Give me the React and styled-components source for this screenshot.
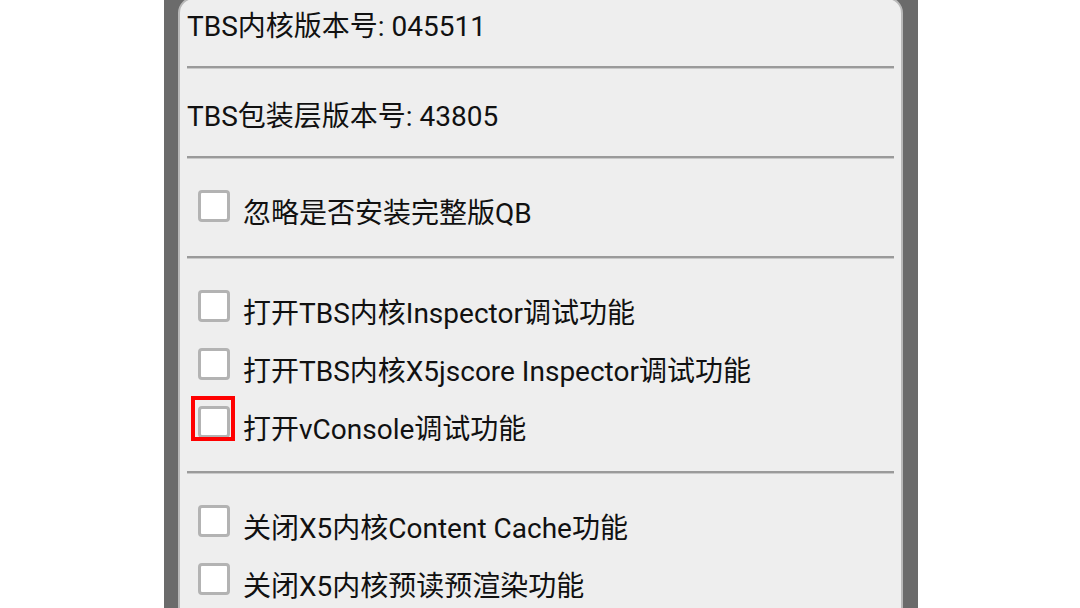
import React from "react";
import styled, { createGlobalStyle } from "styled-components";

const Global = createGlobalStyle`
  html, body { margin: 0; padding: 0; background: #ffffff; }
  body { font-family: Roboto, "Noto Sans CJK SC", sans-serif; overflow: hidden; }
  #root { width: 1080px; height: 608px; overflow: hidden; }
`;

const Frame = styled.div`
  margin-left: 164px;
  width: 754px;
  height: 608px;
  box-sizing: border-box;
  padding: 0 15px 0 14px;
  background: #6b6b6b;
  overflow: hidden;
`;

const Panel = styled.div`
  margin-top: -3px;
  height: 660px;
  box-sizing: border-box;
  border: 2px solid #b9b9b9;
  border-radius: 16px;
  background: #eeeeee;
  padding: 1px 7px 0 7px;
  display: flex;
  flex-direction: column;
  & > * { flex: none; }
`;

const InfoRow = styled.div`
  height: 48px;
  margin-top: ${(p) => (p.$first ? "0" : "21px")};
  display: flex;
  align-items: center;
  font-size: 28px;
  color: #111111;
  white-space: nowrap;
`;

const Divider = styled.div`
  margin-top: ${(p) => p.$mt ?? 18}px;
  height: 3px;
  background: linear-gradient(#9a9a9a 0, #9a9a9a 2px, #c9c9c9 2px, #c9c9c9 3px);
`;

const Section = styled.div`
  padding: 18px 0 ${(p) => p.$pb ?? 0}px 0;
  display: flex;
  flex-direction: column;
`;

const CheckRow = styled.label`
  height: 58px;
  flex: none;
  display: flex;
  align-items: center;
  gap: 13px;
  padding-left: 11px;
  font-size: 28px;
  color: #111111;
  white-space: nowrap;
`;

const BoxWrap = styled.span`
  position: relative;
  width: 32px;
  height: 32px;
  flex: none;
`;

const Box = styled.span`
  display: block;
  width: 32px;
  height: 32px;
  box-sizing: border-box;
  border: 3px solid #b3b3b3;
  border-radius: 4px;
  background: #ffffff;
`;

const Highlight = styled.span`
  position: absolute;
  left: -7px;
  top: -10px;
  width: 44px;
  height: 45px;
  box-sizing: border-box;
  border: 4px solid #ff0000;
`;

const Label = styled.span`
  line-height: 32px;
  margin-top: 15px;
`;

function Check({ label, highlight }) {
  return (
    <CheckRow>
      <BoxWrap>
        <Box />
        {highlight && <Highlight />}
      </BoxWrap>
      <Label>{label}</Label>
    </CheckRow>
  );
}

export default function App() {
  return (
    <>
      <Global />
      <Frame>
        <Panel>
          <InfoRow $first>TBS内核版本号: 045511</InfoRow>
          <Divider />
          <InfoRow>TBS包装层版本号: 43805</InfoRow>
          <Divider />
          <Section $pb={21}>
            <Check label="忽略是否安装完整版QB" />
          </Section>
          <Divider $mt={0} />
          <Section $pb={20}>
            <Check label="打开TBS内核Inspector调试功能" />
            <Check label="打开TBS内核X5jscore Inspector调试功能" />
            <Check label="打开vConsole调试功能" highlight />
          </Section>
          <Divider $mt={0} />
          <Section>
            <Check label="关闭X5内核Content Cache功能" />
            <Check label="关闭X5内核预读预渲染功能" />
          </Section>
        </Panel>
      </Frame>
    </>
  );
}
